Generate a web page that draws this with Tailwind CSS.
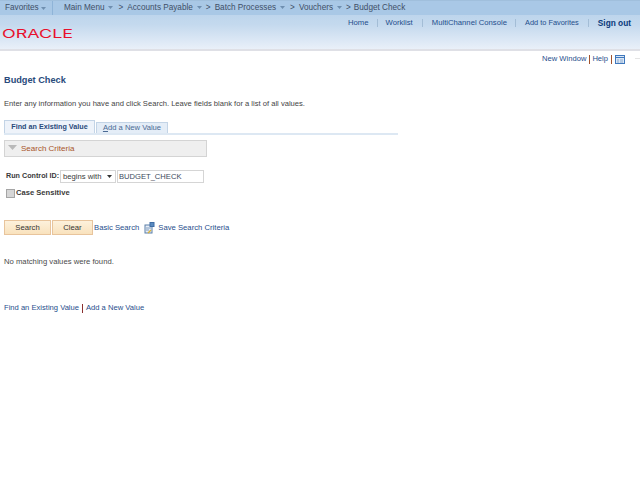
<!DOCTYPE html>
<html><head><meta charset="utf-8"><script src="https://cdn.jsdelivr.net/npm/@tailwindcss/browser@4"></script></head>
<body class="w-[640px] h-[480px] overflow-hidden bg-white font-['Liberation_Sans',Arial,sans-serif] text-[7.6px] text-[#444]">
<header class="h-[51px] relative bg-gradient-to-b from-[#b3cfe9] via-[#c4d9ee] to-[#e9f0f9] border-b-2 border-[#dfe0e6]">
  <nav class="h-[15px] flex items-center bg-[#a9c8e6] text-[8.2px] text-[#3f4f66] border-t border-[#a0bfdc] whitespace-nowrap">
    <span class="w-[53px] pl-[5px] flex items-center gap-[2px] h-full border-r border-[#8fb4d8]">Favorites<svg class="w-[5px] h-[3px]" viewBox="0 0 5 3"><path d="M0 0h5L2.500 3z" fill="#6f8fb0"/></svg></span>
    <span class="pl-[11px] flex items-center gap-[3px]">Main Menu<svg class="w-[5px] h-[3px]" viewBox="0 0 5 3"><path d="M0 0h5L2.500 3z" fill="#6f8fb0"/></svg></span>
    <span class="pl-[6px]">&gt;</span>
    <span class="pl-[4px] flex items-center gap-[4px]">Accounts Payable<svg class="w-[5px] h-[3px]" viewBox="0 0 5 3"><path d="M0 0h5L2.500 3z" fill="#6f8fb0"/></svg></span>
    <span class="pl-[4px]">&gt;</span>
    <span class="pl-[4px] flex items-center gap-[4px]">Batch Processes<svg class="w-[5px] h-[3px]" viewBox="0 0 5 3"><path d="M0 0h5L2.500 3z" fill="#6f8fb0"/></svg></span>
    <span class="pl-[5px]">&gt;</span>
    <span class="pl-[4px] flex items-center gap-[4px]">Vouchers<svg class="w-[5px] h-[3px]" viewBox="0 0 5 3"><path d="M0 0h5L2.500 3z" fill="#6f8fb0"/></svg></span>
    <span class="pl-[4px]">&gt;</span>
    <span class="pl-[3px]">Budget Check</span>
  </nav>
  <div class="flex justify-end items-center h-[16px] pr-[9px] text-[7.7px] text-[#1f4e8c] whitespace-nowrap">
    <span>Home</span><i class="mx-[8px] w-px h-[8px] bg-[#a3bdd6]"></i>
    <span>Worklist</span><i class="mx-[9px] w-px h-[8px] bg-[#a3bdd6]"></i>
    <span>MultiChannel Console</span><i class="mx-[8.500px] w-px h-[8px] bg-[#a3bdd6]"></i>
    <span class="text-[7.400px]">Add to Favorites</span><i class="mx-[9px] w-px h-[8px] bg-[#a3bdd6]"></i>
    <span class="font-bold text-[8.3px] text-[#0a3a7a]">Sign out</span>
  </div>
  <div class="absolute left-[2px] top-[27px] text-[#e8112d] font-['Inter',sans-serif] font-normal text-[11.500px] leading-[14px] scale-x-[1.56] origin-left">ORACLE</div>
</header>
<div class="h-[14px] mt-px flex justify-end items-center pr-[15px] text-[#1f4e8c] whitespace-nowrap relative">
  <span>New Window</span><i class="ml-[3px] mr-[2px] w-px h-[9px] bg-[#a0522d]"></i><span>Help</span><i class="mx-[3px] w-px h-[9px] bg-[#a0522d]"></i>
  <svg class="w-[10px] h-[9px]" viewBox="0 0 10 9"><rect x=".5" y=".5" width="9" height="8" fill="#dbe7f5" stroke="#3f78bd"/><path d="M1 2.500h8" stroke="#3f78bd"/><path d="M2 5h2M5 5h3M2 7h2M5 7h3" stroke="#8aaad0"/></svg>
  <i class="absolute right-0 top-[6px] w-[5px] h-px bg-[#e4e4e4]"></i>
</div>
<main class="pl-[4px]">
  <h1 class="mt-[8px] text-[9.200px] leading-[12px] font-bold text-[#294a7b]">Budget Check</h1>
  <p class="mt-[12px] leading-[12px]">Enter any information you have and click Search. Leave fields blank for a list of all values.</p>
  <div class="mt-[11px] w-[394px] flex items-end h-[14px] border-b-2 border-[#dde8f3] whitespace-nowrap">
    <span class="h-[13px] w-[91px] flex items-center justify-center font-bold text-[7.200px] text-[#294a7b] bg-[#eef3fa] border border-[#c3d4e6] border-b-0">Find an Existing Value</span>
    <span class="ml-[1px] h-[11px] w-[72px] flex items-center justify-center text-[#4a6a94] bg-[#e4edf7] border border-[#c3d4e6] border-b-0"><u>A</u>dd a New Value</span>
  </div>
  <div class="mt-[5px] w-[203px] h-[17px] flex items-center pl-[3px] gap-[4px] text-[8px] bg-[#efefef] border border-[#d4d4d4] text-[#a8552a] whitespace-nowrap">
    <svg class="w-[9px] h-[5px] mb-[3px]" viewBox="0 0 9 5"><path d="M0 0h9L4.500 5z" fill="#b9b9b9"/></svg>Search Criteria
  </div>
  <div class="mt-[13px] h-[13px] pl-[2px] flex items-center text-[#3a3a3a] whitespace-nowrap">
    <span class="w-[54px] font-bold text-[7.2px]">Run Control ID:</span>
    <div class="w-[56px] h-[13px] flex items-center justify-between pl-[2px] pr-[3px] border border-[#d5d5d5] bg-white text-[7.700px]"><span>begins with</span><svg class="w-[5px] h-[3px]" viewBox="0 0 5 3"><path d="M0 0h5L2.500 3z" fill="#333"/></svg></div>
    <div class="ml-[1px] w-[87px] h-[13px] flex items-center pl-px border border-[#d5d5d5] bg-white text-[#3c4a5c]">BUDGET_CHECK</div>
  </div>
  <div class="mt-[4px] h-[12px] pl-[2px] flex items-center gap-px font-bold text-[#3a3a3a]"><span class="w-[9px] h-[9px] bg-[#d6d6d6] border border-[#a5a5a5]"></span>Case Sensitive</div>
  <div class="mt-[21px] flex items-center text-[7.700px] whitespace-nowrap">
    <button class="w-[47px] h-[15px] bg-gradient-to-b from-[#fdf1dc] to-[#f9e2bd] border border-[#e8c49c] text-[#333]">Search</button>
    <button class="ml-[1px] w-[41px] h-[15px] bg-gradient-to-b from-[#fdf1dc] to-[#f9e2bd] border border-[#e8c49c] text-[#333]">Clear</button>
    <span class="ml-px text-[#1f4e8c]">Basic Search</span>
    <svg class="ml-[5px] w-[11px] h-[12px]" viewBox="0 0 11 12"><rect x="1" y="3" width="7" height="8" fill="#e8eef6" stroke="#5a7fa8"/><rect x="6" y="0.500" width="4" height="4" fill="#5a8ac0" stroke="#3f6da5"/><path d="M2 6h5M2 8h3" stroke="#7f9cc0"/><path d="M4 11l3-3" stroke="#d9b13a" stroke-width="1.500"/></svg>
    <span class="ml-[3px] text-[#1f4e8c]">Save Search Criteria</span>
  </div>
  <p class="mt-[21px] leading-[12px] text-[#4a4a4a] text-[7.700px]">No matching values were found.</p>
  <div class="mt-[34px] flex items-center h-[12px] text-[#1f4e8c] whitespace-nowrap"><span>Find an Existing Value</span><i class="mx-[3px] w-px h-[9px] bg-[#8a2f2f]"></i><span>Add a New Value</span></div>
</main>
</body></html>
